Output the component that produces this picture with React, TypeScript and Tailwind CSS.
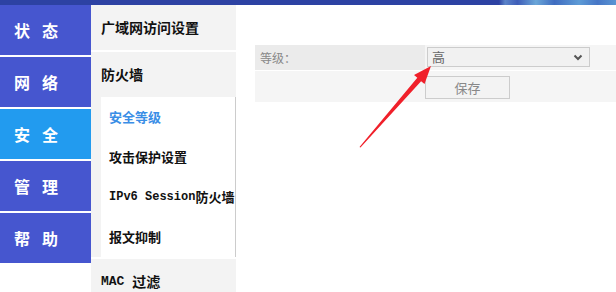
import React from "react";

const navItems = [
  { label: "状态", active: false },
  { label: "网络", active: false },
  { label: "安全", active: true },
  { label: "管理", active: false },
  { label: "帮助", active: false },
];

export default function App() {
  return (
    <div className="relative w-[616px] h-[292px] overflow-hidden bg-white font-['Noto_Sans_CJK_SC',sans-serif]">
      <div className="h-[5px] bg-[linear-gradient(90deg,#2d42a3_0%,#2d42a3_81%,#5b84c9_82%,#3e5db8_84%,#6aa6d8_87%,#3f6cc0_90%,#5d9bd6_94%,#4676c6_97%,#5a95d3_100%)]" />
      <div className="flex">
        <nav className="w-[91px] flex flex-col gap-[2px]">
          {navItems.map((item) => (
            <div
              key={item.label}
              className={`h-[50px] flex items-center pl-[14px] text-white font-bold text-[16px] tracking-[12px] ${
                item.active ? "bg-[#229bef]" : "bg-[#4656cf]"
              }`}
            >
              {item.label}
            </div>
          ))}
        </nav>
        <div className="w-[145px] flex flex-col gap-[2px]">
          <div className="h-[45px] bg-[#f3f3f3] flex items-center pl-[10px] text-[14px] font-bold text-[#111]">
            广域网访问设置
          </div>
          <div className="bg-[#f3f3f3]">
            <div className="h-[45px] flex items-center pl-[10px] text-[14px] font-bold text-[#111]">
              防火墙
            </div>
            <div className="ml-[10px] bg-white border-r border-[#cccccc] text-[13px] font-bold">
              <div className="h-[40px] flex items-center pl-[8px] text-[#3a8ee6]">安全等级</div>
              <div className="h-[40px] flex items-center pl-[8px] text-[#111]">攻击保护设置</div>
              <div className="h-[40px] flex items-center pl-[8px] text-[#111] whitespace-nowrap">
                <span className="font-['Liberation_Mono',monospace] text-[12px]">IPv6 Session</span>
                <span>防火墙</span>
              </div>
              <div className="h-[40px] flex items-center pl-[8px] text-[#111]">报文抑制</div>
            </div>
          </div>
          <div className="h-[45px] bg-[#f3f3f3] flex items-center pl-[10px] text-[14px] font-bold text-[#111] whitespace-nowrap">
            <span className="font-['Liberation_Mono',monospace] text-[13px]">MAC&nbsp;</span>
            <span>过滤</span>
          </div>
        </div>
        <div className="flex-1 ml-[19px] pt-[40px]">
          <div className="flex h-[25px] border-b border-white box-content">
            <div className="w-[170px] bg-[#ebebeb] flex items-center pl-[5px] text-[12px] text-[#888]">
              等级：
            </div>
            <div className="flex-1 bg-[#f5f5f5] pl-[2px] pt-[2px]">
              <div className="w-[163px] h-[20px] border border-[#cccccc] bg-[#f1f1f1] flex items-center justify-between pl-[4px] pr-[6px] text-[13px] text-[#666]">
                <span>高</span>
                <svg width="10" height="7" viewBox="0 0 10 7">
                  <path d="M1.5 1.5 L5 5 L8.5 1.5" fill="none" stroke="#555" strokeWidth="2" />
                </svg>
              </div>
            </div>
          </div>
          <div className="h-[31px] bg-[#f5f5f5] pl-[170px] pt-[5px]">
            <div className="w-[85px] h-[23px] border border-[#cccccc] bg-[#f3f3f3] flex items-center justify-center text-[13px] text-[#888]">
              保存
            </div>
          </div>
        </div>
      </div>
      <svg className="absolute inset-0 pointer-events-none" width="616" height="292" viewBox="0 0 616 292">
        <polygon
          points="359.5,147 417.3,77.8 414,74.9 431,66 424.5,84.1 421.1,81.2 360.5,147.5"
          fill="#f0202a"
        />
      </svg>
    </div>
  );
}
